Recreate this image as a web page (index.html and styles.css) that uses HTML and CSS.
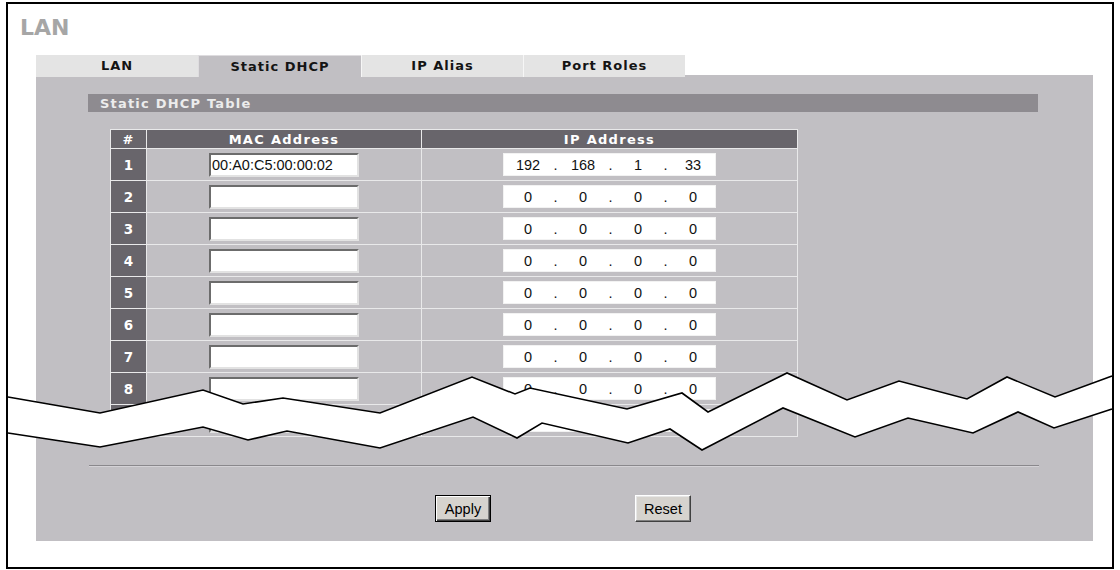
FILE: index.html
```html
<!DOCTYPE html>
<html lang="en">
<head>
<meta charset="utf-8">
<title>LAN - Static DHCP</title>
<link rel="stylesheet" href="styles.css">
</head>
<body>
<div class="frame">
  <h1 class="title">LAN</h1>
  <div class="content">
    <div class="tabs">
      <div class="tab">LAN</div>
      <div class="tab tab-active">Static DHCP</div>
      <div class="tab">IP Alias</div>
      <div class="tab">Port Roles</div>
    </div>
    <div class="panel">
      <div class="section-bar">Static DHCP Table</div>
      <div class="dtable">
        <div class="th">#</div><div class="th">MAC Address</div><div class="th">IP Address</div>

        <div class="num">1</div><div class="cell"><div class="field mac">00:A0:C5:00:00:02</div></div><div class="cell"><div class="field ip"><span class="oct">192</span><span class="dot">.</span><span class="oct">168</span><span class="dot">.</span><span class="oct">1</span><span class="dot">.</span><span class="oct">33</span></div></div>

        <div class="num">2</div><div class="cell"><div class="field mac"></div></div><div class="cell"><div class="field ip"><span class="oct">0</span><span class="dot">.</span><span class="oct">0</span><span class="dot">.</span><span class="oct">0</span><span class="dot">.</span><span class="oct">0</span></div></div>

        <div class="num">3</div><div class="cell"><div class="field mac"></div></div><div class="cell"><div class="field ip"><span class="oct">0</span><span class="dot">.</span><span class="oct">0</span><span class="dot">.</span><span class="oct">0</span><span class="dot">.</span><span class="oct">0</span></div></div>

        <div class="num">4</div><div class="cell"><div class="field mac"></div></div><div class="cell"><div class="field ip"><span class="oct">0</span><span class="dot">.</span><span class="oct">0</span><span class="dot">.</span><span class="oct">0</span><span class="dot">.</span><span class="oct">0</span></div></div>

        <div class="num">5</div><div class="cell"><div class="field mac"></div></div><div class="cell"><div class="field ip"><span class="oct">0</span><span class="dot">.</span><span class="oct">0</span><span class="dot">.</span><span class="oct">0</span><span class="dot">.</span><span class="oct">0</span></div></div>

        <div class="num">6</div><div class="cell"><div class="field mac"></div></div><div class="cell"><div class="field ip"><span class="oct">0</span><span class="dot">.</span><span class="oct">0</span><span class="dot">.</span><span class="oct">0</span><span class="dot">.</span><span class="oct">0</span></div></div>

        <div class="num">7</div><div class="cell"><div class="field mac"></div></div><div class="cell"><div class="field ip"><span class="oct">0</span><span class="dot">.</span><span class="oct">0</span><span class="dot">.</span><span class="oct">0</span><span class="dot">.</span><span class="oct">0</span></div></div>

        <div class="num">8</div><div class="cell"><div class="field mac"></div></div><div class="cell"><div class="field ip"><span class="oct">0</span><span class="dot">.</span><span class="oct">0</span><span class="dot">.</span><span class="oct">0</span><span class="dot">.</span><span class="oct">0</span></div></div>

        <div class="num"></div><div class="cell"><div class="field mac"></div></div><div class="cell"><div class="field ip"></div></div>
      </div>
      <div class="rule"></div>
      <div class="buttons">
        <button class="btn btn-default" type="button">Apply</button>
        <button class="btn" type="button">Reset</button>
      </div>
    </div>
  </div>
</div>
<svg class="cut" width="1120" height="570" viewBox="0 0 1120 570" aria-hidden="true">
  <polygon fill="#fff" points="8,397 100,413 203,390 243,404 283,398 380,413 472,377 515,394 530,388 627,409 682,393 708,412 787,373 847,400 899,381 967,399 1007,377 1055,397 1112,376 1112,409 1054,428 1018,412 973,433 908,418 855,437 783,408 702,450 670,429 628,443 542,423 517,438 473,417 380,448 287,431 248,440 203,427 100,447 8,433"/>
  <polyline fill="none" stroke="#000" stroke-width="1.6" stroke-linejoin="miter" points="8,397 100,413 203,390 243,404 283,398 380,413 472,377 515,394 530,388 627,409 682,393 708,412 787,373 847,400 899,381 967,399 1007,377 1055,397 1112,376"/>
  <polyline fill="none" stroke="#000" stroke-width="1.6" stroke-linejoin="miter" points="8,433 100,447 203,427 248,440 287,431 380,448 473,417 517,438 542,423 628,443 670,429 702,450 783,408 855,437 908,418 973,433 1018,412 1054,428 1112,409"/>
</svg>
</body>
</html>
```

FILE: styles.css
```css
html, body {
  margin: 0;
  padding: 0;
  background: #fff;
}

body {
  width: 1120px;
  height: 570px;
  overflow: hidden;
  position: relative;
  font-family: "DejaVu Sans", Verdana, sans-serif;
}

.frame {
  margin: 2px 0 0 6px;
  width: 1108px;
  height: 567px;
  border: 2px solid #000;
  box-sizing: border-box;
}

.title {
  margin: 0;
  padding: 11px 0 0 12px;
  height: 26px;
  font-family: "DejaVu Sans", Verdana, sans-serif;
  font-weight: bold;
  font-size: 22px;
  line-height: 26px;
  color: #a6a6a6;
}

.content {
  padding: 14px 19px 0 28px;
}

.tabs {
  display: grid;
  grid-template-columns: 162px 163px 162px 162px;
  height: 20px;
}

.tab {
  background: #e4e4e4;
  color: #141414;
  font-weight: bold;
  font-size: 13px;
  letter-spacing: 1px;
  line-height: 22px;
  text-align: center;
  border-left: 1px solid #f6f6f6;
  box-sizing: border-box;
}

.tab:first-child {
  border-left: none;
}

.tab-active {
  background: #c1bfc3;
  border-top: 1px solid #dedcdf;
  border-left: 1px solid #dedcdf;
  line-height: 21px;
}

.panel {
  background: #c1bfc3;
  height: 466px;
  box-sizing: border-box;
  padding-top: 19px;
}

.section-bar {
  margin-left: 52px;
  width: 950px;
  height: 18px;
  box-sizing: border-box;
  padding-left: 12px;
  background: #8e8b90;
  color: #ececec;
  font-weight: bold;
  font-size: 13px;
  letter-spacing: 1.2px;
  line-height: 19px;
}

.dtable {
  margin: 17px 0 0 74px;
  display: grid;
  grid-template-columns: 35px 274px 375px;
  grid-template-rows: 18px repeat(9, 31px);
  gap: 1px;
  width: max-content;
  background: #e9e9ea;
  border: 1px solid #e9e9ea;
}

.th {
  background: #68656b;
  color: #fff;
  font-weight: bold;
  font-size: 13px;
  letter-spacing: 1.3px;
  line-height: 19px;
  text-align: center;
}

.num {
  background: #68656b;
  color: #fff;
  font-weight: bold;
  font-size: 13.5px;
  display: flex;
  align-items: center;
  justify-content: center;
}

.cell {
  background: #c1bfc3;
  display: flex;
  align-items: center;
  justify-content: center;
}

.field {
  background: #fff;
  box-sizing: border-box;
  font-family: "Liberation Sans", Arial, sans-serif;
  font-size: 14.5px;
  color: #111;
}

.mac {
  width: 150px;
  height: 24px;
  border: 2px solid;
  border-color: #6c6c6c #e2e2e2 #e2e2e2 #6c6c6c;
  padding-left: 1px;
  line-height: 20px;
}

.ip {
  width: 213px;
  height: 23px;
  display: flex;
  align-items: center;
  padding-left: 4px;
  border: 1px solid #f2f2f2;
}

.oct {
  width: 40px;
  text-align: center;
}

.dot {
  width: 15px;
  text-align: center;
}

.rule {
  margin: 28px 0 0 53px;
  width: 950px;
  border-top: 1px solid #8a888c;
  border-bottom: 1px solid #d4d2d6;
}

.buttons {
  margin-top: 28px;
  padding-left: 399px;
  display: flex;
  gap: 144px;
}

.btn {
  width: 56px;
  height: 27px;
  padding: 0;
  margin: 0;
  font-family: "Liberation Sans", Arial, sans-serif;
  font-size: 14.5px;
  color: #000;
  background: #d6d3ce;
  border: 1px solid;
  border-color: #ffffff #404040 #404040 #ffffff;
  box-shadow: inset -1px -1px 0 #808080, inset 1px 1px 0 #e6e6e6;
  border-radius: 0;
}

.btn-default {
  border-color: #000;
  box-shadow: inset 1px 1px 0 #ffffff, inset -1px -1px 0 #404040, inset -2px -2px 0 #808080;
}

.cut {
  position: absolute;
  left: 0;
  top: 0;
  pointer-events: none;
}
```
